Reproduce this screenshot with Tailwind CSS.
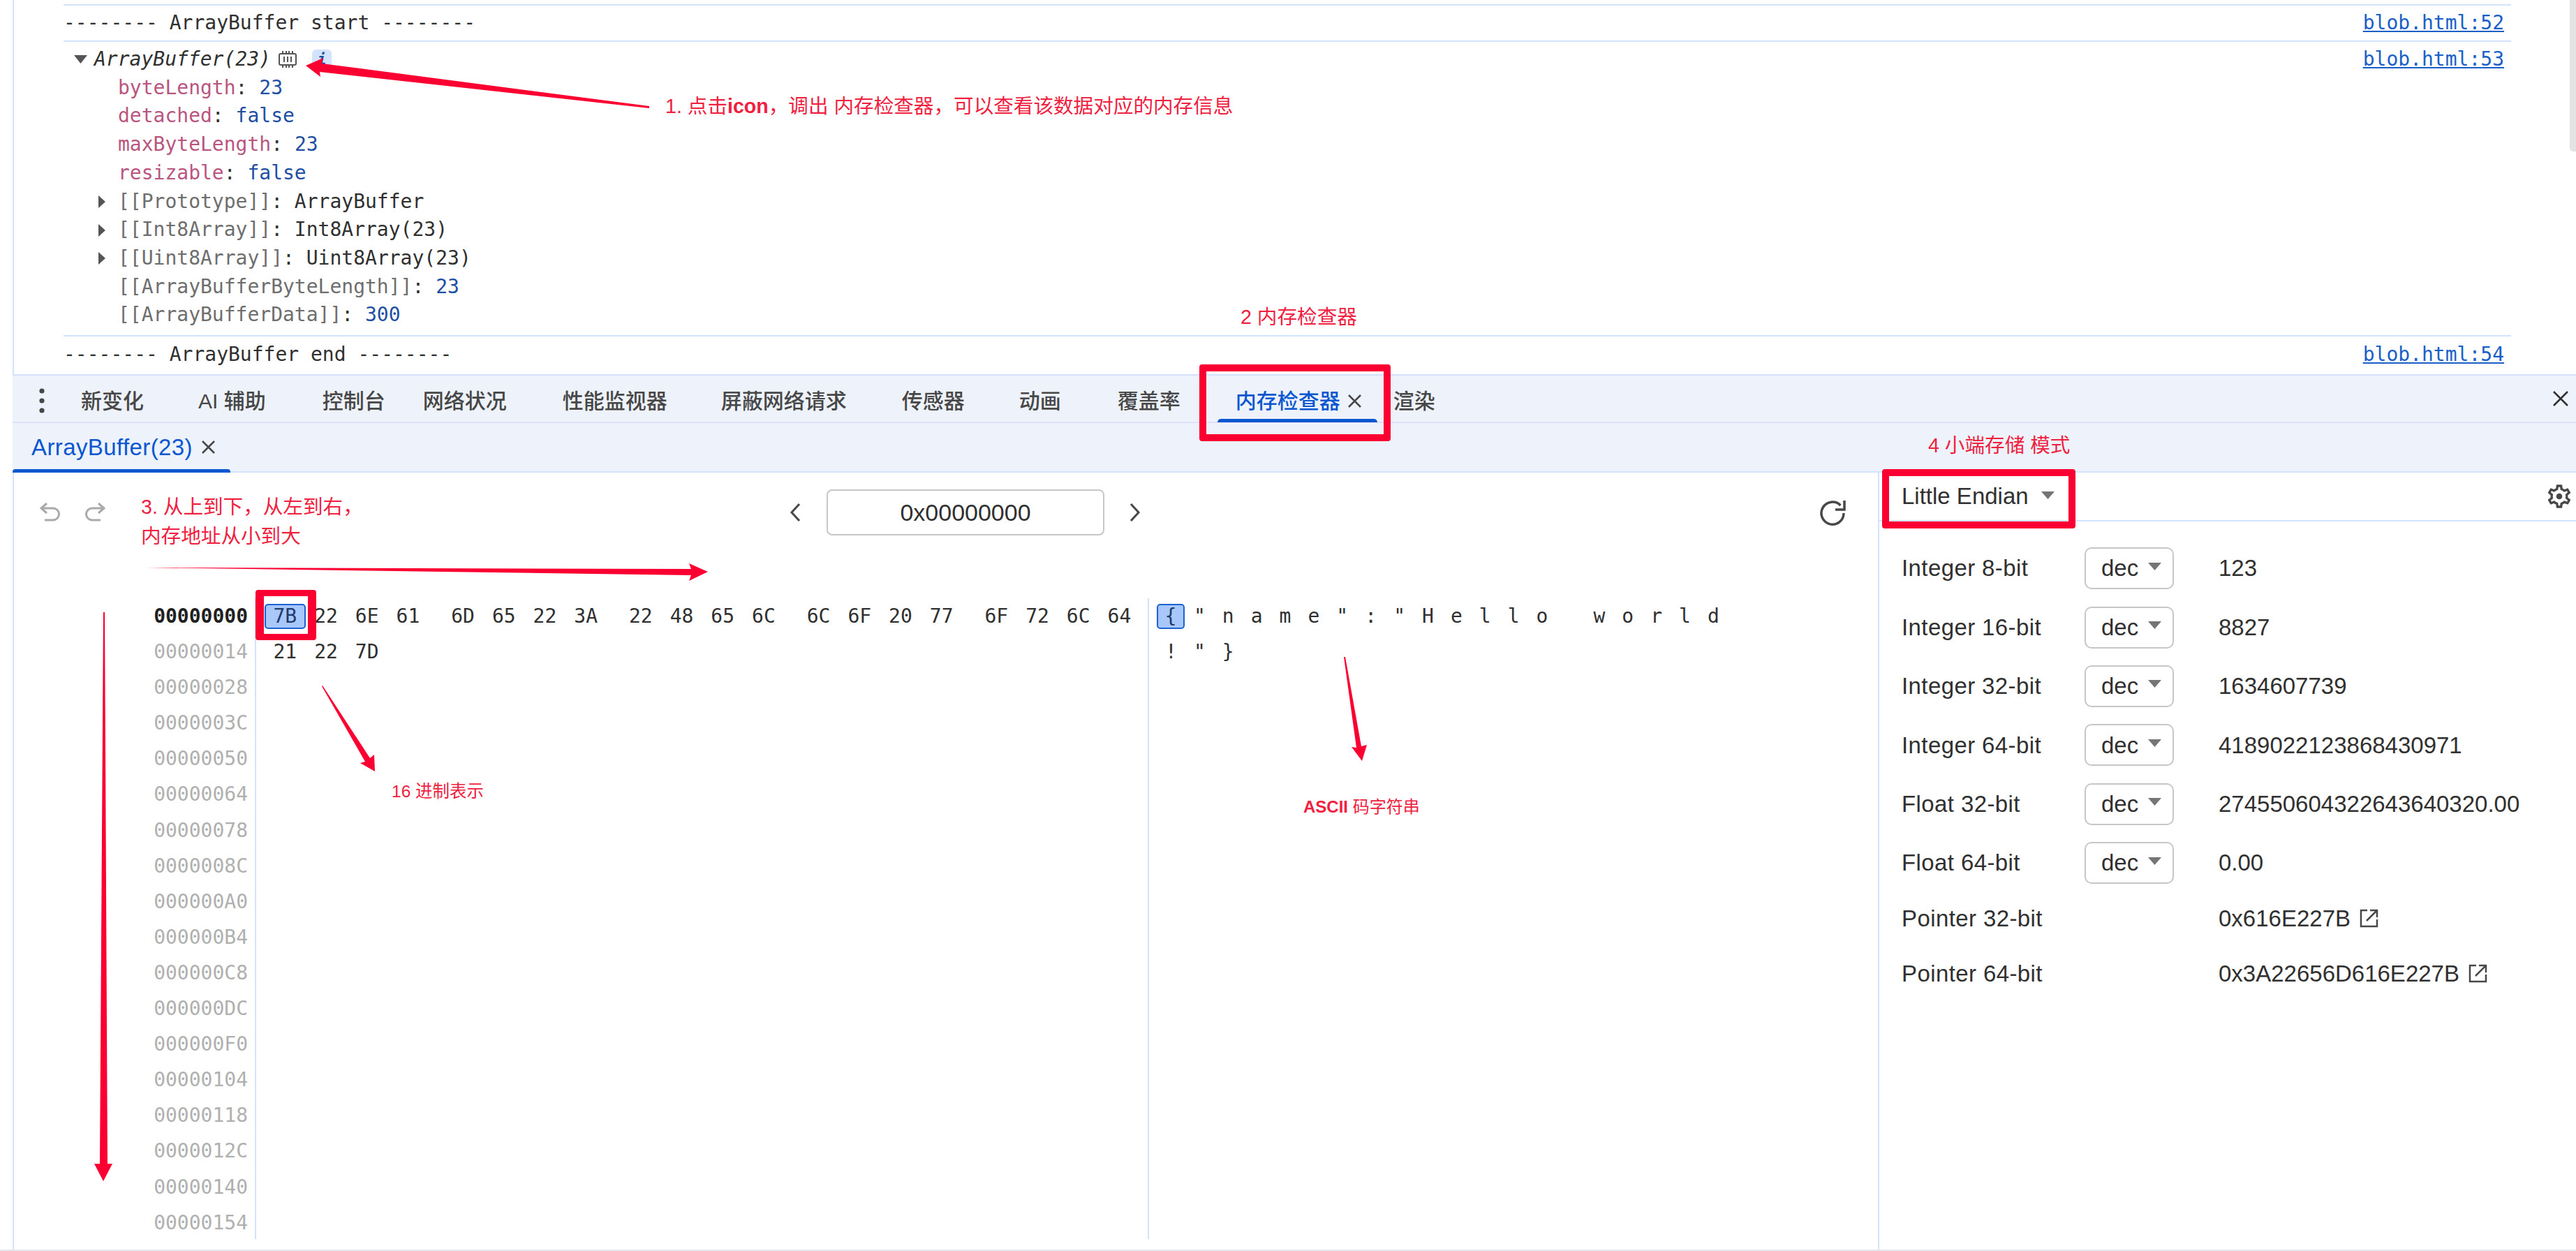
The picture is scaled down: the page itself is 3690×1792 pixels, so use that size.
<!DOCTYPE html>
<html lang="zh-CN">
<head>
    <meta charset="UTF-8">
    <title>Memory Inspector</title>
    <script src="https://cdn.jsdelivr.net/npm/@tailwindcss/browser@4"></script>
</head>
<body class="bg-white overflow-hidden">
<div class="relative w-[3690px] h-[1792px] flex flex-col bg-white text-[#303030] [font-family:'Liberation_Sans','Noto_Sans_CJK_SC',sans-serif] border-b-2 border-[#e3e6ec]">

    <!-- console output -->
    <div class="ml-[18px] border-l-2 border-[#d3e3fd] pl-[71px] pt-[6px] [font-family:'DejaVu_Sans_Mono','Noto_Sans_CJK_SC',monospace] text-[28px] leading-[40.7px] h-[536px] shrink-0">
        <div class="w-[3506px] border-t-2 border-[#d3e3fd]">
            <div class="flex justify-between items-center h-[52px] border-b-2 border-[#d3e3fd] pr-[10px]">
                <span class="whitespace-pre">-------- ArrayBuffer start --------</span>
                <a class="text-[#1a5fc7] underline">blob.html:52</a>
            </div>
            <div class="flex justify-between h-[422px] border-b-2 border-[#d3e3fd] pr-[10px] pt-[5px]">
                <div>
                    <div class="flex items-center">
                        <svg class="ml-[15px] mr-[10px]" width="19" height="12" viewBox="0 0 19 12"><path d="M0 0H19L9.5 12Z" fill="#555"/></svg>
                        <span class="italic">ArrayBuffer(23)</span>
                        <svg class="ml-[10px]" width="28" height="24" viewBox="0 0 28 24" fill="none" stroke="#555" stroke-width="2"><rect x="2" y="4" width="24" height="16" rx="2"/><path d="M9 8v8M14 8v8M19 8v8M7 0v4M12 0v4M16 0v4M21 0v4M7 20v4M12 20v4M16 20v4M21 20v4"/></svg>
                        <span class="ml-[21px] w-[28px] h-[29px] rounded-[6px] bg-[#d3e3fd] flex items-center justify-center text-[#1f4fa3] italic font-bold text-[22px]">i</span>
                    </div>
                    <div class="pl-[78px]"><span class="text-[#b9557f]">byteLength</span>: <span class="text-[#1f4fa3]">23</span></div>
                    <div class="pl-[78px]"><span class="text-[#b9557f]">detached</span>: <span class="text-[#1f4fa3]">false</span></div>
                    <div class="pl-[78px]"><span class="text-[#b9557f]">maxByteLength</span>: <span class="text-[#1f4fa3]">23</span></div>
                    <div class="pl-[78px]"><span class="text-[#b9557f]">resizable</span>: <span class="text-[#1f4fa3]">false</span></div>
                    <div class="flex items-center">
                        <svg class="ml-[50px] mr-[18px]" width="10" height="18" viewBox="0 0 10 18"><path d="M0 0L10 9L0 18Z" fill="#555"/></svg>
                        <span><span class="text-[#6e6e6e]">[[Prototype]]</span>: ArrayBuffer</span>
                    </div>
                    <div class="flex items-center">
                        <svg class="ml-[50px] mr-[18px]" width="10" height="18" viewBox="0 0 10 18"><path d="M0 0L10 9L0 18Z" fill="#555"/></svg>
                        <span><span class="text-[#6e6e6e]">[[Int8Array]]</span>: Int8Array(23)</span>
                    </div>
                    <div class="flex items-center">
                        <svg class="ml-[50px] mr-[18px]" width="10" height="18" viewBox="0 0 10 18"><path d="M0 0L10 9L0 18Z" fill="#555"/></svg>
                        <span><span class="text-[#6e6e6e]">[[Uint8Array]]</span>: Uint8Array(23)</span>
                    </div>
                    <div class="pl-[78px]"><span class="text-[#6e6e6e]">[[ArrayBufferByteLength]]</span>: <span class="text-[#1f4fa3]">23</span></div>
                    <div class="pl-[78px]"><span class="text-[#6e6e6e]">[[ArrayBufferData]]</span>: <span class="text-[#1f4fa3]">300</span></div>
                </div>
                <a class="text-[#1a5fc7] underline">blob.html:53</a>
            </div>
            <div class="flex justify-between items-center h-[52px] pr-[10px]">
                <span class="whitespace-pre">-------- ArrayBuffer end --------</span>
                <a class="text-[#1a5fc7] underline">blob.html:54</a>
            </div>
        </div>
    </div>

    <!-- drawer tab bar -->
    <div class="ml-[18px] h-[70px] shrink-0 bg-[#edf2fb] border-t-2 border-b-2 border-t-[#d3e3fd] border-b-[#dde1fa] flex items-center text-[30px] text-[#474747] font-medium pl-[98px] pt-[6px] relative">
        <svg class="absolute left-[38px] top-[18px]" width="8" height="36" viewBox="0 0 8 36" fill="#474747"><circle cx="4" cy="4" r="3.6"/><circle cx="4" cy="18" r="3.6"/><circle cx="4" cy="32" r="3.6"/></svg>
        <span>新变化</span>
        <span class="ml-[78px]">AI 辅助</span>
        <span class="ml-[81px]">控制台</span>
        <span class="ml-[54px]">网络状况</span>
        <span class="ml-[80px]">性能监视器</span>
        <span class="ml-[77px]">屏蔽网络请求</span>
        <span class="ml-[79px]">传感器</span>
        <span class="ml-[78px]">动画</span>
        <span class="ml-[81px]">覆盖率</span>
        <span class="ml-[79px] relative flex items-center text-[#0b57d0] h-full">
            内存检查器
            <svg class="ml-[10px]" width="21" height="21" viewBox="0 0 21 21" fill="none" stroke="#474747" stroke-width="2.5"><path d="M2 2L19 19M19 2L2 19"/></svg>
            <span class="absolute left-[-26px] w-[229px] bottom-[-1px] h-[5px] rounded-t-[5px] bg-[#0b57d0]"></span>
        </span>
        <span class="ml-[45px]">渲染</span>
        <svg class="ml-auto mr-[10px] -mt-[6px]" width="24" height="24" viewBox="0 0 24 24" fill="none" stroke="#303030" stroke-width="2.5"><path d="M2 2L22 22M22 2L2 22"/></svg>
    </div>

    <!-- memory inspector tabs -->
    <div class="ml-[18px] h-[71px] shrink-0 bg-[#edf2fb] border-b-2 border-[#d3e3fd] flex items-center pl-[27px] text-[33px] relative">
        <span class="text-[#0b57d0] tracking-[0.4px]">ArrayBuffer(23)</span>
        <svg class="ml-[12px]" width="21" height="21" viewBox="0 0 21 21" fill="none" stroke="#474747" stroke-width="2.5"><path d="M2 2L19 19M19 2L2 19"/></svg>
        <span class="absolute left-0 w-[312px] bottom-[-2px] h-[5px] rounded-t-[4px] bg-[#0b57d0]"></span>
    </div>

    <!-- inspector body -->
    <div class="ml-[18px] border-l-2 border-[#d3e3fd] flex flex-1 min-h-0">
        <div class="w-[2670px] shrink-0">
            <div class="flex items-center h-[114px] pl-[36px]">
                <svg width="30" height="30" viewBox="0 0 30 30" fill="none" stroke="#aaa" stroke-width="3"><path d="M11 2L3 9L11 16M3 9H20a7.5 7.5 0 0 1 0 17H8"/></svg>
                <svg class="ml-[36px]" width="30" height="30" viewBox="0 0 30 30" fill="none" stroke="#aaa" stroke-width="3"><path d="M19 2L27 9L19 16M27 9H10a7.5 7.5 0 0 0 0 17H22"/></svg>
                <svg class="ml-[979px]" width="16" height="28" viewBox="0 0 16 28" fill="none" stroke="#474747" stroke-width="3"><path d="M14 2L3 14L14 26"/></svg>
                <div class="ml-[37px] w-[398px] h-[66px] border-2 border-[#c7c7c7] rounded-[8px] flex items-center justify-center text-[34px]">0x00000000</div>
                <svg class="ml-[36px]" width="16" height="28" viewBox="0 0 16 28" fill="none" stroke="#474747" stroke-width="3"><path d="M2 2L13 14L2 26"/></svg>
                <svg class="ml-auto mr-[46px]" width="37" height="37" viewBox="0 0 37 37" fill="none" stroke="#474747" stroke-width="3.5"><path d="M29.5 8A16 16 0 1 0 34 19M35 1V14H22"/></svg>
            </div>
            <div class="mt-[66px] flex [font-family:'DejaVu_Sans_Mono',monospace] text-[28px] leading-[51.1px]">
                <div class="w-[347px] h-[918px] shrink-0 pr-[10px] text-right border-r-2 border-[#d3e3fd] text-[#b0b0b0]">
                    <div class="font-bold text-[#1f1f1f]">00000000</div>
                    <div>00000014</div>
                    <div>00000028</div>
                    <div>0000003C</div>
                    <div>00000050</div>
                    <div>00000064</div>
                    <div>00000078</div>
                    <div>0000008C</div>
                    <div>000000A0</div>
                    <div>000000B4</div>
                    <div>000000C8</div>
                    <div>000000DC</div>
                    <div>000000F0</div>
                    <div>00000104</div>
                    <div>00000118</div>
                    <div>0000012C</div>
                    <div>00000140</div>
                    <div>00000154</div>
                </div>
                <div class="w-[1279px] h-[918px] shrink-0 pl-[12px] border-r-2 border-[#d3e3fd]">
                    <div class="flex h-[51.1px] items-center gap-[20px]">
                        <div class="flex items-center">
                            <span class="w-[58.7px] h-[36px] leading-none flex items-center justify-center rounded-[5px] bg-[#a8c7fa] border-2 border-[#1a63d0] text-[#1f3a6b]">7B</span>
                            <span class="w-[58.7px] text-center">22</span>
                            <span class="w-[58.7px] text-center">6E</span>
                            <span class="w-[58.7px] text-center">61</span>
                        </div>
                        <div class="flex">
                            <span class="w-[58.7px] text-center">6D</span>
                            <span class="w-[58.7px] text-center">65</span>
                            <span class="w-[58.7px] text-center">22</span>
                            <span class="w-[58.7px] text-center">3A</span>
                        </div>
                        <div class="flex">
                            <span class="w-[58.7px] text-center">22</span>
                            <span class="w-[58.7px] text-center">48</span>
                            <span class="w-[58.7px] text-center">65</span>
                            <span class="w-[58.7px] text-center">6C</span>
                        </div>
                        <div class="flex">
                            <span class="w-[58.7px] text-center">6C</span>
                            <span class="w-[58.7px] text-center">6F</span>
                            <span class="w-[58.7px] text-center">20</span>
                            <span class="w-[58.7px] text-center">77</span>
                        </div>
                        <div class="flex">
                            <span class="w-[58.7px] text-center">6F</span>
                            <span class="w-[58.7px] text-center">72</span>
                            <span class="w-[58.7px] text-center">6C</span>
                            <span class="w-[58.7px] text-center">64</span>
                        </div>
                    </div>
                    <div class="flex h-[51.1px] items-center">
                        <span class="w-[58.7px] text-center">21</span>
                        <span class="w-[58.7px] text-center">22</span>
                        <span class="w-[58.7px] text-center">7D</span>
                    </div>
                </div>
                <div class="pl-[11px]">
                    <div class="flex h-[51.1px] items-center">
                        <span class="w-[40px] mr-[0.9px] h-[36px] leading-none flex items-center justify-center rounded-[5px] bg-[#a8c7fa] border-2 border-[#1a63d0] text-[#1f3a6b]">{</span>
                        <span class="w-[40.9px] text-center">"</span>
                        <span class="w-[40.9px] text-center">n</span>
                        <span class="w-[40.9px] text-center">a</span>
                        <span class="w-[40.9px] text-center">m</span>
                        <span class="w-[40.9px] text-center">e</span>
                        <span class="w-[40.9px] text-center">"</span>
                        <span class="w-[40.9px] text-center">:</span>
                        <span class="w-[40.9px] text-center">"</span>
                        <span class="w-[40.9px] text-center">H</span>
                        <span class="w-[40.9px] text-center">e</span>
                        <span class="w-[40.9px] text-center">l</span>
                        <span class="w-[40.9px] text-center">l</span>
                        <span class="w-[40.9px] text-center">o</span>
                        <span class="w-[40.9px] text-center">&nbsp;</span>
                        <span class="w-[40.9px] text-center">w</span>
                        <span class="w-[40.9px] text-center">o</span>
                        <span class="w-[40.9px] text-center">r</span>
                        <span class="w-[40.9px] text-center">l</span>
                        <span class="w-[40.9px] text-center">d</span>
                    </div>
                    <div class="flex h-[51.1px] items-center">
                        <span class="w-[40.9px] text-center">!</span>
                        <span class="w-[40.9px] text-center">"</span>
                        <span class="w-[40.9px] text-center">}</span>
                    </div>
                </div>
            </div>
        </div>

        <!-- value interpreter -->
        <div class="flex-1 border-l-2 border-[#d3e3fd] text-[33px]">
            <div class="flex items-center justify-between h-[70px] border-b-2 border-[#d3e3fd] pl-[32px] pr-[4px]">
                <div class="flex items-center">
                    <span>Little Endian</span>
                    <svg class="ml-[18px] -mt-[4px]" width="19" height="11" viewBox="0 0 19 11"><path d="M0 0H19L9.5 11Z" fill="#757575"/></svg>
                </div>
                <svg width="40" height="40" viewBox="0 0 24 24" fill="#474747"><path d="M19.43 12.98c.04-.32.07-.64.07-.98 0-.34-.03-.66-.07-.98l2.11-1.65c.19-.15.24-.42.12-.64l-2-3.46c-.09-.16-.26-.25-.44-.25-.06 0-.12.01-.17.03l-2.49 1c-.52-.4-1.08-.73-1.69-.98l-.38-2.65C14.46 2.18 14.25 2 14 2h-4c-.25 0-.46.18-.49.42l-.38 2.65c-.61.25-1.17.59-1.69.98l-2.49-1c-.06-.02-.12-.03-.18-.03-.17 0-.34.09-.43.25l-2 3.46c-.13.22-.07.49.12.64l2.11 1.65c-.04.32-.07.65-.07.98 0 .33.03.66.07.98l-2.11 1.65c-.19.15-.24.42-.12.64l2 3.46c.09.16.26.25.44.25.06 0 .12-.01.17-.03l2.49-1c.52.4 1.08.73 1.69.98l.38 2.65c.03.24.24.42.49.42h4c.25 0 .46-.18.49-.42l.38-2.65c.61-.25 1.17-.59 1.69-.98l2.49 1c.06.02.12.03.18.03.17 0 .34-.09.43-.25l2-3.46c.12-.22.07-.49-.12-.64l-2.11-1.65zm-1.98-1.71c.04.31.05.52.05.73 0 .21-.02.43-.05.73l-.14 1.13.89.7 1.08.84-.7 1.21-1.27-.51-1.04-.42-.9.68c-.43.32-.84.56-1.25.73l-1.06.43-.16 1.13-.2 1.35h-1.4l-.19-1.35-.16-1.13-1.06-.43c-.43-.18-.83-.41-1.23-.71l-.91-.7-1.06.43-1.27.51-.7-1.21 1.08-.84.89-.7-.14-1.13c-.03-.31-.05-.54-.05-.74s.02-.43.05-.73l.14-1.13-.89-.7-1.08-.84.7-1.21 1.27.51 1.04.42.9-.68c.43-.32.84-.56 1.25-.73l1.06-.43.16-1.13.2-1.35h1.39l.19 1.35.16 1.13 1.06.43c.43.18.83.41 1.23.71l.91.7 1.06-.43 1.27-.51.7 1.21-1.07.85-.89.7.14 1.13z"/><circle cx="12" cy="12" r="2.6"/></svg>
            </div>
            <div class="pl-[32px] pt-[25px]">
                <div class="flex items-center h-[84.4px]">
                    <span class="w-[262px] tracking-[0.4px]">Integer 8-bit</span>
                    <div class="w-[128px] h-[60px] border-2 border-[#c7c7c7] rounded-[10px] flex items-center pl-[22px]"><span>dec</span><svg class="ml-[14px] -mt-[6px]" width="19" height="11" viewBox="0 0 19 11"><path d="M0 0H19L9.5 11Z" fill="#757575"/></svg></div>
                    <span class="ml-[64px]">123</span>
                </div>
                <div class="flex items-center h-[84.4px]">
                    <span class="w-[262px] tracking-[0.4px]">Integer 16-bit</span>
                    <div class="w-[128px] h-[60px] border-2 border-[#c7c7c7] rounded-[10px] flex items-center pl-[22px]"><span>dec</span><svg class="ml-[14px] -mt-[6px]" width="19" height="11" viewBox="0 0 19 11"><path d="M0 0H19L9.5 11Z" fill="#757575"/></svg></div>
                    <span class="ml-[64px]">8827</span>
                </div>
                <div class="flex items-center h-[84.4px]">
                    <span class="w-[262px] tracking-[0.4px]">Integer 32-bit</span>
                    <div class="w-[128px] h-[60px] border-2 border-[#c7c7c7] rounded-[10px] flex items-center pl-[22px]"><span>dec</span><svg class="ml-[14px] -mt-[6px]" width="19" height="11" viewBox="0 0 19 11"><path d="M0 0H19L9.5 11Z" fill="#757575"/></svg></div>
                    <span class="ml-[64px]">1634607739</span>
                </div>
                <div class="flex items-center h-[84.4px]">
                    <span class="w-[262px] tracking-[0.4px]">Integer 64-bit</span>
                    <div class="w-[128px] h-[60px] border-2 border-[#c7c7c7] rounded-[10px] flex items-center pl-[22px]"><span>dec</span><svg class="ml-[14px] -mt-[6px]" width="19" height="11" viewBox="0 0 19 11"><path d="M0 0H19L9.5 11Z" fill="#757575"/></svg></div>
                    <span class="ml-[64px]">4189022123868430971</span>
                </div>
                <div class="flex items-center h-[84.4px]">
                    <span class="w-[262px] tracking-[0.4px]">Float 32-bit</span>
                    <div class="w-[128px] h-[60px] border-2 border-[#c7c7c7] rounded-[10px] flex items-center pl-[22px]"><span>dec</span><svg class="ml-[14px] -mt-[6px]" width="19" height="11" viewBox="0 0 19 11"><path d="M0 0H19L9.5 11Z" fill="#757575"/></svg></div>
                    <span class="ml-[64px]">274550604322643640320.00</span>
                </div>
                <div class="flex items-center h-[84.4px]">
                    <span class="w-[262px] tracking-[0.4px]">Float 64-bit</span>
                    <div class="w-[128px] h-[60px] border-2 border-[#c7c7c7] rounded-[10px] flex items-center pl-[22px]"><span>dec</span><svg class="ml-[14px] -mt-[6px]" width="19" height="11" viewBox="0 0 19 11"><path d="M0 0H19L9.5 11Z" fill="#757575"/></svg></div>
                    <span class="ml-[64px]">0.00</span>
                </div>
                <div class="flex items-center h-[79px] -mt-[2px]">
                    <span class="w-[454px] tracking-[0.4px]">Pointer 32-bit</span>
                    <span>0x616E227B</span>
                    <svg class="ml-[12px]" width="29" height="29" viewBox="0 0 29 29" fill="none" stroke="#474747" stroke-width="2.5"><path d="M12 3H3V26H26V16M11 18L26 3M16 3H26V13"/></svg>
                </div>
                <div class="flex items-center h-[79px]">
                    <span class="w-[454px] tracking-[0.4px]">Pointer 64-bit</span>
                    <span>0x3A22656D616E227B</span>
                    <svg class="ml-[12px]" width="29" height="29" viewBox="0 0 29 29" fill="none" stroke="#474747" stroke-width="2.5"><path d="M12 3H3V26H26V16M11 18L26 3M16 3H26V13"/></svg>
                </div>
            </div>
        </div>
    </div>

    <!-- scrollbar -->
    <div class="absolute right-0 top-0 w-[9px] h-[217px] rounded-bl-[5px] bg-[#e3e3e3]"></div>

    <!-- annotations drawn over the screenshot -->
    <svg class="absolute left-0 top-0" width="3690" height="1792" viewBox="0 0 3690 1792" fill="#fa0032">
        <path d="M438 94L463 83L461 91L930 152L930 155L458 103L459 110Z"/>
        <path d="M210 813L990 815L987 807L1014 819L987 832L990 824Z"/>
        <path d="M148 877L150 877L154 1667L161 1667L148 1692L135 1667L143 1667Z"/>
        <path d="M461 983L462 982L530 1086L536 1081L537 1105L516 1093L523 1091Z"/>
        <path d="M1925 941L1927 941L1950 1069L1958 1067L1951 1090L1936 1070L1943 1071Z"/>
    </svg>
    <div class="absolute left-[1718px] top-[522px] w-[274px] h-[110px] border-[10px] border-[#fa0032] rounded-[4px]"></div>
    <div class="absolute left-[2696px] top-[672px] w-[277px] h-[85px] border-[10px] border-[#fa0032] rounded-[4px]"></div>
    <div class="absolute left-[366px] top-[845px] w-[87px] h-[72px] border-x-[12px] border-y-[9px] border-[#fa0032] rounded-[4px]"></div>

    <div class="absolute left-[953px] top-[132px] text-[28.6px] leading-[40px] text-[#f0203f] whitespace-pre">1. 点击<b>icon</b>，调出 内存检查器，可以查看该数据对应的内存信息</div>
    <div class="absolute left-[1777px] top-[434px] text-[28.6px] leading-[40px] text-[#f0203f] whitespace-pre">2 内存检查器</div>
    <div class="absolute left-[202px] top-[705px] text-[28.6px] leading-[42px] text-[#f0203f] whitespace-pre">3. 从上到下，从左到右，<br>内存地址从小到大</div>
    <div class="absolute left-[2762px] top-[618px] text-[28.6px] leading-[40px] text-[#f0203f] whitespace-pre">4 小端存储 模式</div>
    <div class="absolute left-[561px] top-[1119px] text-[24.5px] leading-[30px] text-[#f0203f] whitespace-pre">16 进制表示</div>
    <div class="absolute left-[1867px] top-[1141px] text-[24px] leading-[30px] text-[#f0203f] whitespace-pre"><b>ASCII</b> 码字符串</div>
</div>
</body>
</html>
